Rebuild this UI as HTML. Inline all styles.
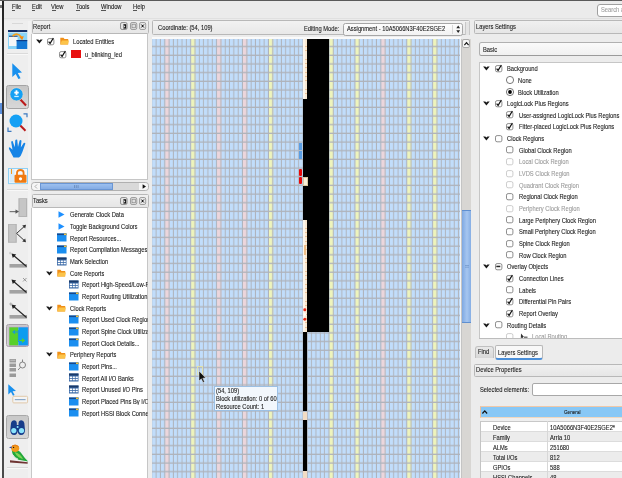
<!DOCTYPE html><html><head><meta charset="utf-8"><style>
html,body{margin:0;padding:0}
body{width:622px;height:478px;overflow:hidden;position:relative;background:#ececec;font-family:"Liberation Sans", sans-serif}
.t{position:absolute;white-space:nowrap;font-size:6.6px;line-height:7.5px;color:#1a1a1a;-webkit-text-stroke:0.1px currentColor;transform:scaleX(0.875);transform-origin:0 0}
#root{will-change:transform;position:absolute;left:0;top:0;width:622px;height:478px;overflow:hidden}
</style></head><body><div id="root">
<div style="position:absolute;left:0px;top:0px;width:2.4px;height:478px;background:#f6f6f6"></div>
<div style="position:absolute;left:2.3px;top:0px;width:1.4px;height:478px;background:linear-gradient(#222,#3a3a3a 20%,#555 60%,#4a4a4a)"></div>
<div style="position:absolute;left:0px;top:0px;width:622px;height:1px;background:#5a5a5a"></div>
<div style="position:absolute;left:0px;top:103px;width:2.4px;height:11.3px;background:#5b8fdc"></div>
<div style="position:absolute;left:0px;top:5px;width:1.6px;height:3px;background:#777"></div>
<div style="position:absolute;left:3.7px;top:1px;width:618.3px;height:18.6px;background:#ebebeb"></div>
<div style="position:absolute;left:3.7px;top:17.8px;width:618.3px;height:1.6px;background:linear-gradient(#dcdcdc,#e4e4e4)"></div>
<div class="t" style="left:11.6px;top:3.10px;">File</div>
<div class="t" style="left:31.6px;top:3.10px;">Edit</div>
<div class="t" style="left:51.4px;top:3.10px;">View</div>
<div class="t" style="left:75.8px;top:3.10px;">Tools</div>
<div class="t" style="left:100.8px;top:3.10px;">Window</div>
<div class="t" style="left:133.2px;top:3.10px;">Help</div>
<div style="position:absolute;left:11.8px;top:9.7px;width:3px;height:0.6px;background:#555"></div>
<div style="position:absolute;left:31.8px;top:9.7px;width:3.2px;height:0.6px;background:#555"></div>
<div style="position:absolute;left:51.6px;top:9.7px;width:4px;height:0.6px;background:#555"></div>
<div style="position:absolute;left:76px;top:9.7px;width:3.5px;height:0.6px;background:#555"></div>
<div style="position:absolute;left:101px;top:9.7px;width:5px;height:0.6px;background:#555"></div>
<div style="position:absolute;left:133.4px;top:9.7px;width:3.6px;height:0.6px;background:#555"></div>
<div style="position:absolute;left:597.2px;top:3.5px;width:30px;height:13.4px;background:#fff;border:1px solid #a0a0a0;border-radius:3px;box-sizing:border-box"></div>
<div class="t" style="left:600.5px;top:6.20px;color:#a0a0a0">Search a</div>
<div style="position:absolute;left:3.7px;top:20.5px;width:26.6px;height:458px;background:#eeeeee"></div>
<div style="position:absolute;left:28.2px;top:20.5px;width:2.5px;height:458px;background:#f2f2f2"></div>
<div style="position:absolute;left:12px;top:23.2px;width:11px;height:0.8px;background:#d8d8d8"></div>
<div style="position:absolute;left:31.5px;top:20.2px;width:117px;height:14px;background:linear-gradient(#f0f0f0,#e6e6e6);border:1px solid #b8b8b8;border-radius:1.5px;box-sizing:border-box"></div>
<div class="t" style="left:33.0px;top:22.70px;">Report</div>
<svg style="position:absolute;left:119.7px;top:22.4px;overflow:visible" width="7.5" height="8" viewBox="0 0 7.5 8"><rect x="0.5" y="0.5" width="6.6" height="7" rx="1.6" fill="#e4e4e4" stroke="#7a7a7a" stroke-width="0.8"/><path d="M3.4 2.2 L6.2 2.2 L6.2 6.6 L3.4 6.6 Z" fill="#111"/><path d="M3.6 2.8 L5.4 4.4 L3.6 6" fill="#ddd"/></svg>
<svg style="position:absolute;left:129.7px;top:22.4px;overflow:visible" width="7" height="8" viewBox="0 0 7 8"><rect x="0.5" y="0.5" width="6.3" height="7" rx="1.6" fill="#e0e0e0" stroke="#8a8a8a" stroke-width="0.8"/><rect x="2" y="2.2" width="3.4" height="3.6" fill="none" stroke="#777" stroke-width="0.6"/></svg>
<svg style="position:absolute;left:139.4px;top:22.4px;overflow:visible" width="7" height="8" viewBox="0 0 7 8"><rect x="0.5" y="0.5" width="6.2" height="7" rx="1.6" fill="#e8e8e8" stroke="#8a8a8a" stroke-width="0.8"/><path d="M1.8 2 L5.4 6 M5.4 2 L1.8 6" stroke="#555" stroke-width="0.7"/><circle cx="3.6" cy="4" r="0.9" fill="#111"/></svg>
<div style="position:absolute;left:30.8px;top:34px;width:117.7px;height:146px;background:#fff;border:1px solid #c6c6c6;border-left:1.8px solid #c8c8c8;border-top:none;box-sizing:border-box"></div>
<div style="position:absolute;left:31px;top:182px;width:117.6px;height:9px;background:#d9d9d9;border:1px solid #b0b0b0;border-radius:3.5px;box-sizing:border-box"></div>
<div style="position:absolute;left:31.6px;top:182.6px;width:8.4px;height:7.8px;background:#f6f6f6;border-radius:3px 0 0 3px"></div>
<svg style="position:absolute;left:34px;top:184.3px;overflow:visible" width="4" height="5" viewBox="0 0 4 5"><path d="M3 0.5 L1 2.5 L3 4.5" fill="none" stroke="#999" stroke-width="0.8"/></svg>
<div style="position:absolute;left:40px;top:182.8px;width:73.3px;height:7.4px;background:linear-gradient(#9cc0f0,#84ace4);border:0.6px solid #6a96d4;box-sizing:border-box"></div>
<svg style="position:absolute;left:74px;top:184.8px;overflow:visible" width="5" height="3" viewBox="0 0 5 3"><path d="M0.5 0 V3 M2.3 0 V3 M4.1 0 V3" stroke="#5a7aa8" stroke-width="0.6"/></svg>
<div style="position:absolute;left:138.6px;top:182.6px;width:9.4px;height:7.8px;background:#f6f6f6;border-radius:0 3px 3px 0"></div>
<svg style="position:absolute;left:141.6px;top:184px;overflow:visible" width="4.5" height="5" viewBox="0 0 4.5 5"><path d="M0.6 0.3 L4 2.5 L0.6 4.7 Z" fill="#111"/></svg>
<div style="position:absolute;left:31.5px;top:194.3px;width:117px;height:14px;background:linear-gradient(#f0f0f0,#e6e6e6);border:1px solid #b8b8b8;border-radius:1.5px;box-sizing:border-box"></div>
<div class="t" style="left:33.0px;top:196.80px;">Tasks</div>
<svg style="position:absolute;left:119.7px;top:196.5px;overflow:visible" width="7.5" height="8" viewBox="0 0 7.5 8"><rect x="0.5" y="0.5" width="6.6" height="7" rx="1.6" fill="#e4e4e4" stroke="#7a7a7a" stroke-width="0.8"/><path d="M3.4 2.2 L6.2 2.2 L6.2 6.6 L3.4 6.6 Z" fill="#111"/><path d="M3.6 2.8 L5.4 4.4 L3.6 6" fill="#ddd"/></svg>
<svg style="position:absolute;left:129.7px;top:196.5px;overflow:visible" width="7" height="8" viewBox="0 0 7 8"><rect x="0.5" y="0.5" width="6.3" height="7" rx="1.6" fill="#e0e0e0" stroke="#8a8a8a" stroke-width="0.8"/><rect x="2" y="2.2" width="3.4" height="3.6" fill="none" stroke="#777" stroke-width="0.6"/></svg>
<svg style="position:absolute;left:139.4px;top:196.5px;overflow:visible" width="7" height="8" viewBox="0 0 7 8"><rect x="0.5" y="0.5" width="6.2" height="7" rx="1.6" fill="#e8e8e8" stroke="#8a8a8a" stroke-width="0.8"/><path d="M1.8 2 L5.4 6 M5.4 2 L1.8 6" stroke="#555" stroke-width="0.7"/><circle cx="3.6" cy="4" r="0.9" fill="#111"/></svg>
<div style="position:absolute;left:30.8px;top:208.3px;width:117.7px;height:272px;background:#fff;border:1px solid #c6c6c6;border-left:1.8px solid #c8c8c8;border-top:none;box-sizing:border-box"></div>
<div style="position:absolute;left:151.8px;top:20.2px;width:318.7px;height:15px;background:linear-gradient(#f2f2f2,#e8e8e8);border:1px solid #b8b8b8;border-radius:1.5px;box-sizing:border-box"></div>
<div class="t" style="left:157.6px;top:24.00px;">Coordinate: (54, 109)</div>
<div class="t" style="left:304.3px;top:24.60px;">Editing Mode:</div>
<div style="position:absolute;left:343.4px;top:22.5px;width:119.8px;height:13.2px;background:linear-gradient(#fdfdfd,#f2f2f2);border:1px solid #a6a6a6;border-radius:2.5px;box-sizing:border-box"></div>
<div style="position:absolute;left:452.3px;top:24.5px;width:0.7px;height:9px;background:#d8d8d8"></div>
<svg style="position:absolute;left:455.6px;top:24.8px;overflow:visible" width="4.4" height="8.5" viewBox="0 0 4.4 8.5"><path d="M0.3 3.2 L2.2 0.5 L4.1 3.2 Z M0.3 5.3 L2.2 8 L4.1 5.3 Z" fill="#222"/></svg>
<div style="position:absolute;left:465px;top:22px;width:4.5px;height:13px;background:#e4e4e4;border-left:0.6px solid #c8c8c8;border-right:0.6px solid #c8c8c8;box-sizing:border-box"></div>
<div class="t" style="left:347px;top:24.80px;">Assignment - 10A5066N3F40E2SGE2</div>
<div style="position:absolute;left:151.5px;top:36.5px;width:309px;height:2.3px;background:#fafafa"></div>
<svg width="308.6" height="439.2" viewBox="151.7 38.8 308.6 439.2" style="position:absolute;left:151.7px;top:38.8px">
<rect x="151.7" y="38.8" width="308.6" height="439.2" fill="#afb3bb"/>
<pattern id="pb" patternUnits="userSpaceOnUse" x="151.940" y="38.384" width="4.321" height="8.676"><rect width="3.35" height="7.35" fill="#c1ddfb"/></pattern>
<pattern id="pp" patternUnits="userSpaceOnUse" x="151.940" y="38.384" width="4.321" height="8.676"><rect width="3.35" height="7.35" fill="#ecd6dc"/></pattern>
<pattern id="py" patternUnits="userSpaceOnUse" x="151.940" y="38.384" width="4.321" height="8.676"><rect width="3.35" height="7.35" fill="#eef4bc"/></pattern>
<pattern id="pw" patternUnits="userSpaceOnUse" x="151.940" y="38.384" width="4.321" height="8.676"><rect width="3.35" height="7.35" fill="#f6eee2"/></pattern>
<pattern id="pl" patternUnits="userSpaceOnUse" x="151.940" y="38.384" width="4.321" height="8.676"><rect width="3.35" height="7.35" fill="#d4e8fa"/></pattern>
<rect x="151.7" y="38.8" width="308.6" height="439.2" fill="url(#pb)"/>
<rect x="164.90" y="38.8" width="4.321" height="439.2" fill="#afb3bb"/><rect x="164.90" y="38.8" width="4.321" height="439.2" fill="url(#pp)"/>
<rect x="190.83" y="38.8" width="4.321" height="439.2" fill="#afb3bb"/><rect x="190.83" y="38.8" width="4.321" height="439.2" fill="url(#py)"/>
<rect x="216.75" y="38.8" width="4.321" height="439.2" fill="#afb3bb"/><rect x="216.75" y="38.8" width="4.321" height="439.2" fill="url(#pp)"/>
<rect x="242.68" y="38.8" width="4.321" height="439.2" fill="#afb3bb"/><rect x="242.68" y="38.8" width="4.321" height="439.2" fill="url(#pp)"/>
<rect x="268.61" y="38.8" width="4.321" height="439.2" fill="#afb3bb"/><rect x="268.61" y="38.8" width="4.321" height="439.2" fill="url(#py)"/>
<rect x="329.10" y="38.8" width="4.321" height="439.2" fill="#afb3bb"/><rect x="329.10" y="38.8" width="4.321" height="439.2" fill="url(#py)"/>
<rect x="355.03" y="38.8" width="4.321" height="439.2" fill="#afb3bb"/><rect x="355.03" y="38.8" width="4.321" height="439.2" fill="url(#py)"/>
<rect x="380.95" y="38.8" width="4.321" height="439.2" fill="#afb3bb"/><rect x="380.95" y="38.8" width="4.321" height="439.2" fill="url(#pp)"/>
<rect x="406.88" y="38.8" width="4.321" height="439.2" fill="#afb3bb"/><rect x="406.88" y="38.8" width="4.321" height="439.2" fill="url(#py)"/>
<rect x="432.81" y="38.8" width="4.321" height="439.2" fill="#afb3bb"/><rect x="432.81" y="38.8" width="4.321" height="439.2" fill="url(#py)"/>
<div style="position:absolute;left:303.17499999999995px;top:38.8px;width:4.321px;height:60px;background:linear-gradient(90deg,#fbf6ee 0,#fbf4ea 45%,#f4dcbc 75%,#f8ecdc 100%)"></div>
<div style="position:absolute;left:305.47499999999997px;top:40px;width:1.4px;height:58px;background:repeating-linear-gradient(#f8ead6 0,#f8ead6 1.6px,#e8b888 1.6px,#e8b888 2.4px,#f8ead6 2.4px,#f8ead6 4.3px);opacity:.8"></div>
<div style="position:absolute;left:307.4959999999999px;top:39px;width:21.605000000000018px;height:293.2px;background:#000"></div>
<div style="position:absolute;left:303.17499999999995px;top:98.8px;width:4.321px;height:121.50000000000001px;background:#000"></div>
<div style="position:absolute;left:303.17499999999995px;top:220.3px;width:4.321px;height:111.89999999999998px;background:linear-gradient(90deg,#fbf6ee 0,#fbf4ea 45%,#f4dcbc 75%,#f8ecdc 100%)"></div>
<div style="position:absolute;left:305.47499999999997px;top:222px;width:1.4px;height:108px;background:repeating-linear-gradient(#f8ead6 0,#f8ead6 1.6px,#e8b888 1.6px,#e8b888 2.4px,#f8ead6 2.4px,#f8ead6 4.3px);opacity:.8"></div>
<div style="position:absolute;left:303.97499999999997px;top:245px;width:2.2px;height:10px;background:#eab070;opacity:.8"></div>
<div style="position:absolute;left:303.47499999999997px;top:332.2px;width:3.7209999999999996px;height:79.30000000000001px;background:#000"></div>
<div style="position:absolute;left:303.17499999999995px;top:411.5px;width:4.321px;height:8.5px;background:#f2dcc4"></div>
<div style="position:absolute;left:303.47499999999997px;top:420px;width:3.7209999999999996px;height:51px;background:#000"></div>
<div style="position:absolute;left:303.17499999999995px;top:471px;width:4.321px;height:7px;background:#f2dcc4"></div>
<svg style="position:absolute;left:303.47499999999997px;top:307.5px;overflow:visible" width="3.6" height="13" viewBox="0 0 3.6 13"><circle cx="1.8" cy="1.8" r="1.5" fill="#e82818"/><circle cx="1.8" cy="11.2" r="1.5" fill="#e82818"/><circle cx="1.8" cy="6.5" r="1.2" fill="#fff"/></svg>
<div style="position:absolute;left:299.154px;top:142.5px;width:3.2px;height:7.4px;background:#5a9ee4"></div>
<div style="position:absolute;left:299.154px;top:151.2px;width:3.2px;height:7.4px;background:#5a9ee4"></div>
<div style="position:absolute;left:299.454px;top:168.6px;width:3px;height:7.2px;background:#e80808;border-radius:1px"></div>
<div style="position:absolute;left:299.454px;top:177.3px;width:3px;height:7.2px;background:#e80808;border-radius:1px"></div>
<div style="position:absolute;left:302.7px;top:177px;width:5.1px;height:8.6px;background:#faf0d8;border:0.5px solid #d8c8a0;box-sizing:border-box"></div>
<div style="position:absolute;left:214.1px;top:385.7px;width:64px;height:25.4px;background:#f2f7fc;border:1px solid #9cc0e4;box-sizing:border-box"></div>
<div class="t" style="left:215.8px;top:387.40px;">(54, 109)</div>
<div class="t" style="left:215.8px;top:395.20px;">Block utilization: 0 of 60</div>
<div class="t" style="left:215.8px;top:403.00px;">Resource Count: 1</div>
<svg style="position:absolute;left:197px;top:366px" width="12" height="18" viewBox="0 0 12 18"><rect x="0.5" y="0.5" width="5" height="8" fill="none" stroke="#e8e4a0" stroke-width="0.8"/><path d="M2 5 L2 15 L4.3 12.8 L6 16.5 L7.5 15.8 L5.8 12.2 L8.8 12 Z" fill="#111" stroke="#eee" stroke-width="0.5"/></svg>
<div style="position:absolute;left:460.3px;top:36.5px;width:1.2px;height:442px;background:#f6f6f6"></div>
<div style="position:absolute;left:461.3px;top:38.5px;width:9.6px;height:440px;background:#d8d6d3;border-left:1px solid #c4c4c4;box-sizing:border-box"></div>
<div style="position:absolute;left:461.8px;top:38.5px;width:8.6px;height:9.7px;background:#f6f6f6;border:1px solid #aaa;border-radius:2px;box-sizing:border-box"></div>
<svg style="position:absolute;left:463.6px;top:41.6px;overflow:visible" width="5" height="4" viewBox="0 0 5 4"><path d="M0.4 3.2 L2.5 0.6 L4.6 3.2" fill="none" stroke="#111" stroke-width="1.1"/></svg>
<div style="position:absolute;left:462px;top:210px;width:8.7px;height:113px;background:linear-gradient(90deg,#7ea8e2,#a6c6f0 55%,#86aee4);border-top:1px solid #5f8fd0;border-bottom:1px solid #5f8fd0;box-sizing:border-box"></div>
<svg style="position:absolute;left:464.5px;top:265px;overflow:visible" width="4" height="3" viewBox="0 0 4 3"><path d="M0 0.5 H4 M0 2.2 H4" stroke="#5a80b8" stroke-width="0.5"/></svg>
<div style="position:absolute;left:471px;top:20.5px;width:151px;height:458px;background:#ececec"></div>
<div style="position:absolute;left:474.3px;top:20.2px;width:150px;height:13.9px;background:linear-gradient(#f0f0f0,#e6e6e6);border:1px solid #b8b8b8;border-radius:1.5px;box-sizing:border-box"></div>
<div class="t" style="left:475.8px;top:22.70px;">Layers Settings</div>
<div style="position:absolute;left:478.8px;top:41.8px;width:150px;height:13.9px;background:linear-gradient(#fafafa,#f0f0f0);border:1px solid #b0b0b0;border-bottom-color:#9a9a9a;border-radius:2.5px;box-sizing:border-box"></div>
<div class="t" style="left:483px;top:45.70px;">Basic</div>
<div style="position:absolute;left:478.6px;top:61.6px;width:150px;height:277.6px;background:#fff;border:1px solid #c6c6c6;box-sizing:border-box"></div>
<svg style="position:absolute;left:35.800000000000004px;top:38.800000000000004px;overflow:visible" width="6.8" height="5" viewBox="0 0 6.8 5"><path d="M0.1 0.4 L2.3 0.4 L3.4 1.5 L4.5 0.4 L6.7 0.4 L3.4 4.4 Z" fill="#1a1a1a"/></svg>
<svg style="position:absolute;left:46.6px;top:37.5px;overflow:visible" width="7.5" height="7.5" viewBox="0 0 7.5 7.5"><rect x="0.5" y="0.6" width="6.4" height="6.2" rx="1.6" fill="#fff" stroke="#7a7a7a" stroke-width="0.85"/><path d="M1.6 3.6 L3.1 5.4 L6.4 0" fill="none" stroke="#111" stroke-width="1.2"/></svg>
<svg style="position:absolute;left:59.5px;top:37.1px;overflow:visible" width="9" height="8" viewBox="0 0 9 8"><path d="M0.3 0.8 L3.5 0.8 L4.5 2 L8.2 2 L8.2 7.4 L0.3 7.4 Z" fill="#f09018"/><path d="M1.8 3.4 L9 3.4 L7.8 7.4 L0.3 7.4 Z" fill="#fcc44a"/></svg>
<div class="t" style="left:72.6px;top:38.00px;">Located Entities</div>
<svg style="position:absolute;left:58.5px;top:50.5px;overflow:visible" width="7.5" height="7.5" viewBox="0 0 7.5 7.5"><rect x="0.5" y="0.6" width="6.4" height="6.2" rx="1.6" fill="#fff" stroke="#7a7a7a" stroke-width="0.85"/><path d="M1.6 3.6 L3.1 5.4 L6.4 0" fill="none" stroke="#111" stroke-width="1.2"/></svg>
<div style="position:absolute;left:71.4px;top:50.2px;width:9.6px;height:8px;background:#e81010"></div>
<div class="t" style="left:84.6px;top:51.00px;">u_blinking_led</div>
<svg style="position:absolute;left:58.4px;top:211.1px;overflow:visible" width="7" height="7" viewBox="0 0 7 7"><path d="M0.5 0.3 L6.5 3.5 L0.5 6.7 Z" fill="#1e90ff"/></svg>
<div class="t" style="left:70.2px;top:211.40px;max-width:88.6px;overflow:hidden">Generate Clock Data</div>
<svg style="position:absolute;left:58.4px;top:222.76px;overflow:visible" width="7" height="7" viewBox="0 0 7 7"><path d="M0.5 0.3 L6.5 3.5 L0.5 6.7 Z" fill="#1e90ff"/></svg>
<div class="t" style="left:70.2px;top:223.06px;max-width:88.6px;overflow:hidden">Toggle Background Colors</div>
<svg style="position:absolute;left:57.3px;top:233.42px;overflow:visible" width="10" height="9" viewBox="0 0 10 9"><rect x="0" y="0.5" width="9.5" height="8" fill="#1a8ef0"/><rect x="0" y="0.5" width="9.5" height="1.6" fill="#18488a"/><rect x="7" y="0.5" width="2.5" height="1.6" fill="#f0c040"/></svg>
<div class="t" style="left:70.2px;top:234.72px;max-width:88.6px;overflow:hidden">Report Resources...</div>
<svg style="position:absolute;left:57.3px;top:245.07999999999998px;overflow:visible" width="10" height="9" viewBox="0 0 10 9"><rect x="0" y="0.5" width="9.5" height="8" fill="#1a8ef0"/><rect x="0" y="0.5" width="9.5" height="1.6" fill="#18488a"/><rect x="7" y="0.5" width="2.5" height="1.6" fill="#f0c040"/></svg>
<div class="t" style="left:70.2px;top:246.38px;max-width:88.6px;overflow:hidden">Report Compilation Messages</div>
<svg style="position:absolute;left:57.3px;top:256.74px;overflow:visible" width="10" height="9" viewBox="0 0 10 9"><rect x="0" y="0.5" width="9.5" height="8" fill="#3a6aa8"/><rect x="0" y="0.5" width="9.5" height="2" fill="#1a3a6a"/><rect x="0.8" y="3.5" width="2.2" height="1.5" fill="#fff"/><rect x="3.7" y="3.5" width="2.2" height="1.5" fill="#fff"/><rect x="6.6" y="3.5" width="2.2" height="1.5" fill="#fff"/><rect x="0.8" y="5.8" width="2.2" height="1.5" fill="#fff"/><rect x="3.7" y="5.8" width="2.2" height="1.5" fill="#fff"/><rect x="6.6" y="5.8" width="2.2" height="1.5" fill="#fff"/></svg>
<div class="t" style="left:70.2px;top:258.04px;max-width:88.6px;overflow:hidden">Mark Selection</div>
<svg style="position:absolute;left:46.300000000000004px;top:270.59999999999997px;overflow:visible" width="6.8" height="5" viewBox="0 0 6.8 5"><path d="M0.1 0.4 L2.3 0.4 L3.4 1.5 L4.5 0.4 L6.7 0.4 L3.4 4.4 Z" fill="#1a1a1a"/></svg>
<svg style="position:absolute;left:57.2px;top:268.9px;overflow:visible" width="9" height="8" viewBox="0 0 9 8"><path d="M0.3 0.8 L3.5 0.8 L4.5 2 L8.2 2 L8.2 7.4 L0.3 7.4 Z" fill="#f09018"/><path d="M1.8 3.4 L9 3.4 L7.8 7.4 L0.3 7.4 Z" fill="#fcc44a"/></svg>
<div class="t" style="left:70.2px;top:269.70px;max-width:88px;overflow:hidden">Core Reports</div>
<svg style="position:absolute;left:69.2px;top:280.06px;overflow:visible" width="10" height="9" viewBox="0 0 10 9"><rect x="0" y="0.5" width="9.5" height="8" fill="#3a6aa8"/><rect x="0" y="0.5" width="9.5" height="2" fill="#1a3a6a"/><rect x="0.8" y="3.5" width="2.2" height="1.5" fill="#fff"/><rect x="3.7" y="3.5" width="2.2" height="1.5" fill="#fff"/><rect x="6.6" y="3.5" width="2.2" height="1.5" fill="#fff"/><rect x="0.8" y="5.8" width="2.2" height="1.5" fill="#fff"/><rect x="3.7" y="5.8" width="2.2" height="1.5" fill="#fff"/><rect x="6.6" y="5.8" width="2.2" height="1.5" fill="#fff"/></svg>
<div class="t" style="left:81.8px;top:281.36px;max-width:75.2px;overflow:hidden">Report High-Speed/Low-Power Tiles</div>
<svg style="position:absolute;left:69.2px;top:291.72px;overflow:visible" width="10" height="9" viewBox="0 0 10 9"><rect x="0" y="0.5" width="9.5" height="8" fill="#1a8ef0"/><rect x="0" y="0.5" width="9.5" height="1.6" fill="#18488a"/><rect x="7" y="0.5" width="2.5" height="1.6" fill="#f0c040"/></svg>
<div class="t" style="left:81.8px;top:293.02px;max-width:75.2px;overflow:hidden">Report Routing Utilization</div>
<svg style="position:absolute;left:46.300000000000004px;top:305.58px;overflow:visible" width="6.8" height="5" viewBox="0 0 6.8 5"><path d="M0.1 0.4 L2.3 0.4 L3.4 1.5 L4.5 0.4 L6.7 0.4 L3.4 4.4 Z" fill="#1a1a1a"/></svg>
<svg style="position:absolute;left:57.2px;top:303.88px;overflow:visible" width="9" height="8" viewBox="0 0 9 8"><path d="M0.3 0.8 L3.5 0.8 L4.5 2 L8.2 2 L8.2 7.4 L0.3 7.4 Z" fill="#f09018"/><path d="M1.8 3.4 L9 3.4 L7.8 7.4 L0.3 7.4 Z" fill="#fcc44a"/></svg>
<div class="t" style="left:70.2px;top:304.68px;max-width:88px;overflow:hidden">Clock Reports</div>
<svg style="position:absolute;left:69.2px;top:315.03999999999996px;overflow:visible" width="10" height="9" viewBox="0 0 10 9"><rect x="0" y="0.5" width="9.5" height="8" fill="#1a8ef0"/><rect x="0" y="0.5" width="9.5" height="1.6" fill="#18488a"/><rect x="7" y="0.5" width="2.5" height="1.6" fill="#f0c040"/></svg>
<div class="t" style="left:81.8px;top:316.34px;max-width:75.2px;overflow:hidden">Report Used Clock Regions</div>
<svg style="position:absolute;left:69.2px;top:326.7px;overflow:visible" width="10" height="9" viewBox="0 0 10 9"><rect x="0" y="0.5" width="9.5" height="8" fill="#1a8ef0"/><rect x="0" y="0.5" width="9.5" height="1.6" fill="#18488a"/><rect x="7" y="0.5" width="2.5" height="1.6" fill="#f0c040"/></svg>
<div class="t" style="left:81.8px;top:328.00px;max-width:75.2px;overflow:hidden">Report Spine Clock Utilization</div>
<svg style="position:absolute;left:69.2px;top:338.36px;overflow:visible" width="10" height="9" viewBox="0 0 10 9"><rect x="0" y="0.5" width="9.5" height="8" fill="#1a8ef0"/><rect x="0" y="0.5" width="9.5" height="1.6" fill="#18488a"/><rect x="7" y="0.5" width="2.5" height="1.6" fill="#f0c040"/></svg>
<div class="t" style="left:81.8px;top:339.66px;max-width:75.2px;overflow:hidden">Report Clock Details...</div>
<svg style="position:absolute;left:46.300000000000004px;top:352.21999999999997px;overflow:visible" width="6.8" height="5" viewBox="0 0 6.8 5"><path d="M0.1 0.4 L2.3 0.4 L3.4 1.5 L4.5 0.4 L6.7 0.4 L3.4 4.4 Z" fill="#1a1a1a"/></svg>
<svg style="position:absolute;left:57.2px;top:350.52px;overflow:visible" width="9" height="8" viewBox="0 0 9 8"><path d="M0.3 0.8 L3.5 0.8 L4.5 2 L8.2 2 L8.2 7.4 L0.3 7.4 Z" fill="#f09018"/><path d="M1.8 3.4 L9 3.4 L7.8 7.4 L0.3 7.4 Z" fill="#fcc44a"/></svg>
<div class="t" style="left:70.2px;top:351.32px;max-width:88px;overflow:hidden">Periphery Reports</div>
<svg style="position:absolute;left:69.2px;top:361.68px;overflow:visible" width="10" height="9" viewBox="0 0 10 9"><rect x="0" y="0.5" width="9.5" height="8" fill="#1a8ef0"/><rect x="0" y="0.5" width="9.5" height="1.6" fill="#18488a"/><rect x="7" y="0.5" width="2.5" height="1.6" fill="#f0c040"/></svg>
<div class="t" style="left:81.8px;top:362.98px;max-width:75.2px;overflow:hidden">Report Pins...</div>
<svg style="position:absolute;left:69.2px;top:373.34000000000003px;overflow:visible" width="10" height="9" viewBox="0 0 10 9"><rect x="0" y="0.5" width="9.5" height="8" fill="#3a6aa8"/><rect x="0" y="0.5" width="9.5" height="2" fill="#1a3a6a"/><rect x="0.8" y="3.5" width="2.2" height="1.5" fill="#fff"/><rect x="3.7" y="3.5" width="2.2" height="1.5" fill="#fff"/><rect x="6.6" y="3.5" width="2.2" height="1.5" fill="#fff"/><rect x="0.8" y="5.8" width="2.2" height="1.5" fill="#fff"/><rect x="3.7" y="5.8" width="2.2" height="1.5" fill="#fff"/><rect x="6.6" y="5.8" width="2.2" height="1.5" fill="#fff"/></svg>
<div class="t" style="left:81.8px;top:374.64px;max-width:75.2px;overflow:hidden">Report All I/O Banks</div>
<svg style="position:absolute;left:69.2px;top:385.0px;overflow:visible" width="10" height="9" viewBox="0 0 10 9"><rect x="0" y="0.5" width="9.5" height="8" fill="#3a6aa8"/><rect x="0" y="0.5" width="9.5" height="2" fill="#1a3a6a"/><rect x="0.8" y="3.5" width="2.2" height="1.5" fill="#fff"/><rect x="3.7" y="3.5" width="2.2" height="1.5" fill="#fff"/><rect x="6.6" y="3.5" width="2.2" height="1.5" fill="#fff"/><rect x="0.8" y="5.8" width="2.2" height="1.5" fill="#fff"/><rect x="3.7" y="5.8" width="2.2" height="1.5" fill="#fff"/><rect x="6.6" y="5.8" width="2.2" height="1.5" fill="#fff"/></svg>
<div class="t" style="left:81.8px;top:386.30px;max-width:75.2px;overflow:hidden">Report Unused I/O Pins</div>
<svg style="position:absolute;left:69.2px;top:396.65999999999997px;overflow:visible" width="10" height="9" viewBox="0 0 10 9"><rect x="0" y="0.5" width="9.5" height="8" fill="#1a8ef0"/><rect x="0" y="0.5" width="9.5" height="1.6" fill="#18488a"/><rect x="7" y="0.5" width="2.5" height="1.6" fill="#f0c040"/></svg>
<div class="t" style="left:81.8px;top:397.96px;max-width:75.2px;overflow:hidden">Report Placed Pins By I/O Standard</div>
<svg style="position:absolute;left:69.2px;top:408.32px;overflow:visible" width="10" height="9" viewBox="0 0 10 9"><rect x="0" y="0.5" width="9.5" height="8" fill="#1a8ef0"/><rect x="0" y="0.5" width="9.5" height="1.6" fill="#18488a"/><rect x="7" y="0.5" width="2.5" height="1.6" fill="#f0c040"/></svg>
<div class="t" style="left:81.8px;top:409.62px;max-width:75.2px;overflow:hidden">Report HSSI Block Connectivity</div>
<svg style="position:absolute;left:483.20000000000005px;top:66.10000000000001px;overflow:visible" width="6.8" height="5" viewBox="0 0 6.8 5"><path d="M0.1 0.4 L2.3 0.4 L3.4 1.5 L4.5 0.4 L6.7 0.4 L3.4 4.4 Z" fill="#1a1a1a"/></svg>
<svg style="position:absolute;left:494.90000000000003px;top:64.80000000000001px;overflow:visible" width="7.5" height="7.5" viewBox="0 0 7.5 7.5"><rect x="0.5" y="0.6" width="6.4" height="6.2" rx="1.6" fill="#fff" stroke="#7a7a7a" stroke-width="0.85"/><path d="M1.6 3.6 L3.1 5.4 L6.4 0" fill="none" stroke="#111" stroke-width="1.2"/></svg>
<div class="t" style="left:506.7px;top:65.20px;">Background</div>
<svg style="position:absolute;left:506px;top:76.057px;overflow:visible" width="8" height="8" viewBox="0 0 8 8"><circle cx="4" cy="4" r="3.6" fill="#fff" stroke="#555" stroke-width="0.8"/></svg>
<div class="t" style="left:518.4px;top:76.86px;">None</div>
<svg style="position:absolute;left:506px;top:87.714px;overflow:visible" width="8" height="8" viewBox="0 0 8 8"><circle cx="4" cy="4" r="3.6" fill="#fff" stroke="#555" stroke-width="0.8"/><circle cx="4" cy="4" r="1.9" fill="#000"/></svg>
<div class="t" style="left:518.4px;top:88.51px;">Block Utilization</div>
<svg style="position:absolute;left:483.20000000000005px;top:101.07100000000001px;overflow:visible" width="6.8" height="5" viewBox="0 0 6.8 5"><path d="M0.1 0.4 L2.3 0.4 L3.4 1.5 L4.5 0.4 L6.7 0.4 L3.4 4.4 Z" fill="#1a1a1a"/></svg>
<svg style="position:absolute;left:494.90000000000003px;top:99.77100000000002px;overflow:visible" width="7.5" height="7.5" viewBox="0 0 7.5 7.5"><rect x="0.5" y="0.6" width="6.4" height="6.2" rx="1.6" fill="#fff" stroke="#7a7a7a" stroke-width="0.85"/><path d="M1.6 3.6 L3.1 5.4 L6.4 0" fill="none" stroke="#111" stroke-width="1.2"/></svg>
<div class="t" style="left:506.7px;top:100.17px;">LogicLock Plus Regions</div>
<svg style="position:absolute;left:506.0px;top:111.42800000000001px;overflow:visible" width="7.5" height="7.5" viewBox="0 0 7.5 7.5"><rect x="0.5" y="0.6" width="6.4" height="6.2" rx="1.6" fill="#fff" stroke="#7a7a7a" stroke-width="0.85"/><path d="M1.6 3.6 L3.1 5.4 L6.4 0" fill="none" stroke="#111" stroke-width="1.2"/></svg>
<div class="t" style="left:518.5px;top:111.83px;">User-assigned LogicLock Plus Regions</div>
<svg style="position:absolute;left:506.0px;top:123.08500000000001px;overflow:visible" width="7.5" height="7.5" viewBox="0 0 7.5 7.5"><rect x="0.5" y="0.6" width="6.4" height="6.2" rx="1.6" fill="#fff" stroke="#7a7a7a" stroke-width="0.85"/><path d="M1.6 3.6 L3.1 5.4 L6.4 0" fill="none" stroke="#111" stroke-width="1.2"/></svg>
<div class="t" style="left:518.5px;top:123.49px;">Fitter-placed LogicLock Plus Regions</div>
<svg style="position:absolute;left:483.20000000000005px;top:136.042px;overflow:visible" width="6.8" height="5" viewBox="0 0 6.8 5"><path d="M0.1 0.4 L2.3 0.4 L3.4 1.5 L4.5 0.4 L6.7 0.4 L3.4 4.4 Z" fill="#1a1a1a"/></svg>
<svg style="position:absolute;left:494.90000000000003px;top:134.74200000000002px;overflow:visible" width="7.5" height="7.5" viewBox="0 0 7.5 7.5"><rect x="0.5" y="0.6" width="6.4" height="6.2" rx="1.6" fill="#fff" stroke="#7a7a7a" stroke-width="0.85"/></svg>
<div class="t" style="left:506.7px;top:135.14px;">Clock Regions</div>
<svg style="position:absolute;left:506.0px;top:146.39900000000003px;overflow:visible" width="7.5" height="7.5" viewBox="0 0 7.5 7.5"><rect x="0.5" y="0.6" width="6.4" height="6.2" rx="1.6" fill="#fff" stroke="#7a7a7a" stroke-width="0.85"/></svg>
<div class="t" style="left:518.5px;top:146.80px;">Global Clock Region</div>
<svg style="position:absolute;left:506.0px;top:158.056px;overflow:visible" width="7.5" height="7.5" viewBox="0 0 7.5 7.5"><rect x="0.5" y="0.6" width="6.4" height="6.2" rx="1.6" fill="#fff" stroke="#c4c4c4" stroke-width="0.85"/></svg>
<div class="t" style="left:518.5px;top:158.46px;color:#9a9a9a;">Local Clock Region</div>
<svg style="position:absolute;left:506.0px;top:169.713px;overflow:visible" width="7.5" height="7.5" viewBox="0 0 7.5 7.5"><rect x="0.5" y="0.6" width="6.4" height="6.2" rx="1.6" fill="#fff" stroke="#c4c4c4" stroke-width="0.85"/></svg>
<div class="t" style="left:518.5px;top:170.11px;color:#9a9a9a;">LVDS Clock Region</div>
<svg style="position:absolute;left:506.0px;top:181.37px;overflow:visible" width="7.5" height="7.5" viewBox="0 0 7.5 7.5"><rect x="0.5" y="0.6" width="6.4" height="6.2" rx="1.6" fill="#fff" stroke="#c4c4c4" stroke-width="0.85"/></svg>
<div class="t" style="left:518.5px;top:181.77px;color:#9a9a9a;">Quadrant Clock Region</div>
<svg style="position:absolute;left:506.0px;top:193.02700000000002px;overflow:visible" width="7.5" height="7.5" viewBox="0 0 7.5 7.5"><rect x="0.5" y="0.6" width="6.4" height="6.2" rx="1.6" fill="#fff" stroke="#7a7a7a" stroke-width="0.85"/></svg>
<div class="t" style="left:518.5px;top:193.43px;">Regional Clock Region</div>
<svg style="position:absolute;left:506.0px;top:204.68400000000003px;overflow:visible" width="7.5" height="7.5" viewBox="0 0 7.5 7.5"><rect x="0.5" y="0.6" width="6.4" height="6.2" rx="1.6" fill="#fff" stroke="#c4c4c4" stroke-width="0.85"/></svg>
<div class="t" style="left:518.5px;top:205.08px;color:#9a9a9a;">Periphery Clock Region</div>
<svg style="position:absolute;left:506.0px;top:216.341px;overflow:visible" width="7.5" height="7.5" viewBox="0 0 7.5 7.5"><rect x="0.5" y="0.6" width="6.4" height="6.2" rx="1.6" fill="#fff" stroke="#7a7a7a" stroke-width="0.85"/></svg>
<div class="t" style="left:518.5px;top:216.74px;">Large Periphery Clock Region</div>
<svg style="position:absolute;left:506.0px;top:227.99800000000002px;overflow:visible" width="7.5" height="7.5" viewBox="0 0 7.5 7.5"><rect x="0.5" y="0.6" width="6.4" height="6.2" rx="1.6" fill="#fff" stroke="#7a7a7a" stroke-width="0.85"/></svg>
<div class="t" style="left:518.5px;top:228.40px;">Small Periphery Clock Region</div>
<svg style="position:absolute;left:506.0px;top:239.655px;overflow:visible" width="7.5" height="7.5" viewBox="0 0 7.5 7.5"><rect x="0.5" y="0.6" width="6.4" height="6.2" rx="1.6" fill="#fff" stroke="#7a7a7a" stroke-width="0.85"/></svg>
<div class="t" style="left:518.5px;top:240.06px;">Spine Clock Region</div>
<svg style="position:absolute;left:506.0px;top:251.312px;overflow:visible" width="7.5" height="7.5" viewBox="0 0 7.5 7.5"><rect x="0.5" y="0.6" width="6.4" height="6.2" rx="1.6" fill="#fff" stroke="#7a7a7a" stroke-width="0.85"/></svg>
<div class="t" style="left:518.5px;top:251.71px;">Row Clock Region</div>
<svg style="position:absolute;left:483.20000000000005px;top:264.269px;overflow:visible" width="6.8" height="5" viewBox="0 0 6.8 5"><path d="M0.1 0.4 L2.3 0.4 L3.4 1.5 L4.5 0.4 L6.7 0.4 L3.4 4.4 Z" fill="#1a1a1a"/></svg>
<svg style="position:absolute;left:494.90000000000003px;top:262.969px;overflow:visible" width="7.5" height="7.5" viewBox="0 0 7.5 7.5"><rect x="0.5" y="0.6" width="6.4" height="6.2" rx="1.6" fill="#fff" stroke="#7a7a7a" stroke-width="0.85"/><rect x="1.3" y="2.7" width="4" height="1.5" fill="#222"/></svg>
<div class="t" style="left:506.7px;top:263.37px;">Overlay Objects</div>
<svg style="position:absolute;left:506.0px;top:274.626px;overflow:visible" width="7.5" height="7.5" viewBox="0 0 7.5 7.5"><rect x="0.5" y="0.6" width="6.4" height="6.2" rx="1.6" fill="#fff" stroke="#7a7a7a" stroke-width="0.85"/><path d="M1.6 3.6 L3.1 5.4 L6.4 0" fill="none" stroke="#111" stroke-width="1.2"/></svg>
<div class="t" style="left:518.5px;top:275.03px;">Connection Lines</div>
<svg style="position:absolute;left:506.0px;top:286.283px;overflow:visible" width="7.5" height="7.5" viewBox="0 0 7.5 7.5"><rect x="0.5" y="0.6" width="6.4" height="6.2" rx="1.6" fill="#fff" stroke="#7a7a7a" stroke-width="0.85"/></svg>
<div class="t" style="left:518.5px;top:286.68px;">Labels</div>
<svg style="position:absolute;left:506.0px;top:297.93999999999994px;overflow:visible" width="7.5" height="7.5" viewBox="0 0 7.5 7.5"><rect x="0.5" y="0.6" width="6.4" height="6.2" rx="1.6" fill="#fff" stroke="#7a7a7a" stroke-width="0.85"/><path d="M1.6 3.6 L3.1 5.4 L6.4 0" fill="none" stroke="#111" stroke-width="1.2"/></svg>
<div class="t" style="left:518.5px;top:298.34px;">Differential Pin Pairs</div>
<svg style="position:absolute;left:506.0px;top:309.597px;overflow:visible" width="7.5" height="7.5" viewBox="0 0 7.5 7.5"><rect x="0.5" y="0.6" width="6.4" height="6.2" rx="1.6" fill="#fff" stroke="#7a7a7a" stroke-width="0.85"/><path d="M1.6 3.6 L3.1 5.4 L6.4 0" fill="none" stroke="#111" stroke-width="1.2"/></svg>
<div class="t" style="left:518.5px;top:310.00px;">Report Overlay</div>
<svg style="position:absolute;left:483.20000000000005px;top:322.55400000000003px;overflow:visible" width="6.8" height="5" viewBox="0 0 6.8 5"><path d="M0.1 0.4 L2.3 0.4 L3.4 1.5 L4.5 0.4 L6.7 0.4 L3.4 4.4 Z" fill="#1a1a1a"/></svg>
<svg style="position:absolute;left:494.90000000000003px;top:321.254px;overflow:visible" width="7.5" height="7.5" viewBox="0 0 7.5 7.5"><rect x="0.5" y="0.6" width="6.4" height="6.2" rx="1.6" fill="#fff" stroke="#7a7a7a" stroke-width="0.85"/></svg>
<div class="t" style="left:506.7px;top:321.65px;">Routing Details</div>
<svg style="position:absolute;left:506.0px;top:332.91099999999994px;overflow:visible" width="7.5" height="7.5" viewBox="0 0 7.5 7.5"><rect x="0.5" y="0.6" width="6.4" height="6.2" rx="1.6" fill="#fff" stroke="#c4c4c4" stroke-width="0.85"/></svg>
<svg style="position:absolute;left:519.6px;top:333.01099999999997px;overflow:visible" width="8" height="7" viewBox="0 0 8 7"><path d="M1 0.5 L4 4 L2.6 4.2 L3.6 6.4 L2.8 6.8 L1.8 4.6 L0.8 5.6 Z" fill="#333"/><rect x="4" y="3.5" width="3.5" height="3" fill="#777"/></svg>
<div class="t" style="left:531.6px;top:333.31px;color:#9a9a9a;">Local Routing</div>
<div style="position:absolute;left:479px;top:339.2px;width:143px;height:2px;background:#ececec"></div>
<div style="position:absolute;left:479px;top:338.2px;width:143px;height:1px;background:#bcbcbc"></div>
<div style="position:absolute;left:474.8px;top:345.6px;width:19.6px;height:12.6px;background:linear-gradient(#e8e8e8,#d8d8d8);border:1px solid #c0c0c0;border-bottom:none;border-radius:3px 3px 0 0;box-sizing:border-box"></div>
<div class="t" style="left:477.5px;top:348.00px;">Find</div>
<div style="position:absolute;left:494.8px;top:345px;width:48.4px;height:14.5px;background:#f8f8f8;border:1px solid #b8b8b8;border-bottom:2px solid #4a8ed8;border-radius:2px 2px 3px 3px;box-sizing:border-box"></div>
<div class="t" style="left:497.5px;top:348.70px;">Layers Settings</div>
<div style="position:absolute;left:474.3px;top:363.8px;width:150px;height:13.2px;background:linear-gradient(#f0f0f0,#e6e6e6);border:1px solid #b8b8b8;border-radius:1.5px;box-sizing:border-box"></div>
<div class="t" style="left:475.8px;top:366.30px;">Device Properties</div>
<div class="t" style="left:479.8px;top:385.80px;">Selected elements:</div>
<div style="position:absolute;left:532.4px;top:383px;width:100px;height:13.4px;background:#fff;border:1px solid #a8a8a8;border-radius:2px;box-sizing:border-box"></div>
<div style="position:absolute;left:479.6px;top:405.6px;width:145px;height:12.6px;background:#88c8f6;border-top:1px solid #f0c8a8;border-left:1px solid #e8c0a0;border-bottom:1px solid #f0d8c0;box-sizing:border-box"></div>
<svg style="position:absolute;left:481.8px;top:409.6px;overflow:visible" width="5.5" height="4" viewBox="0 0 5.5 4"><path d="M0.4 3.5 L2.75 0.8 L5.1 3.5" fill="none" stroke="#111" stroke-width="1.2"/></svg>
<div class="t" style="left:563.6px;top:408.60px;font-size:5.3px">General</div>
<div style="position:absolute;left:479.6px;top:418.2px;width:145px;height:2.8px;background:#efefef"></div>
<div style="position:absolute;left:479.6px;top:421px;width:145px;height:60px;background:#fff;border-left:1px solid #c4c4c4;border-top:1px solid #c8c8c8;box-sizing:border-box"></div>
<div style="position:absolute;left:480.6px;top:421.6px;width:145px;height:9.4px;background:#ffffff"></div>
<div style="position:absolute;left:480.6px;top:430.6px;width:145px;height:0.8px;background:#dcdcdc"></div>
<div style="position:absolute;left:546.6px;top:421px;width:0.8px;height:10px;background:#d8d8d8"></div>
<div class="t" style="left:493px;top:424.10px;">Device</div>
<div class="t" style="left:549.5px;top:424.10px;">10A5066N3F40E2SGE2*</div>
<div style="position:absolute;left:480.6px;top:431.6px;width:145px;height:9.4px;background:#ececec"></div>
<div style="position:absolute;left:480.6px;top:440.6px;width:145px;height:0.8px;background:#dcdcdc"></div>
<div style="position:absolute;left:546.6px;top:431px;width:0.8px;height:10px;background:#d8d8d8"></div>
<div class="t" style="left:493px;top:434.10px;">Family</div>
<div class="t" style="left:549.5px;top:434.10px;">Arria 10</div>
<div style="position:absolute;left:480.6px;top:441.6px;width:145px;height:9.4px;background:#ffffff"></div>
<div style="position:absolute;left:480.6px;top:450.6px;width:145px;height:0.8px;background:#dcdcdc"></div>
<div style="position:absolute;left:546.6px;top:441px;width:0.8px;height:10px;background:#d8d8d8"></div>
<div class="t" style="left:493px;top:444.10px;">ALMs</div>
<div class="t" style="left:549.5px;top:444.10px;">251680</div>
<div style="position:absolute;left:480.6px;top:451.6px;width:145px;height:9.4px;background:#ececec"></div>
<div style="position:absolute;left:480.6px;top:460.6px;width:145px;height:0.8px;background:#dcdcdc"></div>
<div style="position:absolute;left:546.6px;top:451px;width:0.8px;height:10px;background:#d8d8d8"></div>
<div class="t" style="left:493px;top:454.10px;">Total I/Os</div>
<div class="t" style="left:549.5px;top:454.10px;">812</div>
<div style="position:absolute;left:480.6px;top:461.6px;width:145px;height:9.4px;background:#ffffff"></div>
<div style="position:absolute;left:480.6px;top:470.6px;width:145px;height:0.8px;background:#dcdcdc"></div>
<div style="position:absolute;left:546.6px;top:461px;width:0.8px;height:10px;background:#d8d8d8"></div>
<div class="t" style="left:493px;top:464.10px;">GPIOs</div>
<div class="t" style="left:549.5px;top:464.10px;">588</div>
<div style="position:absolute;left:480.6px;top:471.6px;width:145px;height:9.4px;background:#ececec"></div>
<div style="position:absolute;left:480.6px;top:480.6px;width:145px;height:0.8px;background:#dcdcdc"></div>
<div style="position:absolute;left:546.6px;top:471px;width:0.8px;height:10px;background:#d8d8d8"></div>
<div class="t" style="left:493px;top:474.10px;">HSSI Channels</div>
<div class="t" style="left:549.5px;top:474.10px;">48</div>
<div style="position:absolute;left:7px;top:54.1px;width:21px;height:1px;background:#f8f8f8"></div>
<div style="position:absolute;left:7px;top:53.1px;width:21px;height:1px;background:#dadada"></div>
<div style="position:absolute;left:7px;top:189.6px;width:21px;height:1px;background:#f8f8f8"></div>
<div style="position:absolute;left:7px;top:188.6px;width:21px;height:1px;background:#dadada"></div>
<div style="position:absolute;left:7px;top:468.4px;width:21px;height:1px;background:#f8f8f8"></div>
<div style="position:absolute;left:7px;top:467.4px;width:21px;height:1px;background:#dadada"></div>
<svg style="position:absolute;left:8.4px;top:29.6px;overflow:visible" width="19.2" height="19" viewBox="0 0 19.2 19"><rect x="0" y="0" width="19.2" height="19" fill="#8ad4f8"/><rect x="0" y="0" width="19.2" height="2.2" fill="#12306a"/><rect x="0" y="2.2" width="19.2" height="0.8" fill="#d8f0fc"/><rect x="1" y="6.5" width="8.6" height="9.5" fill="#f4f6f8"/><rect x="1" y="5.6" width="8.6" height="1.4" fill="#4a6a98"/><rect x="8.6" y="10" width="10.6" height="9" fill="#1478d4"/><rect x="8.6" y="10" width="10.6" height="1.2" fill="#0c3c88"/><path d="M4.6 6 Q9.5 1.8 13.6 7.4" fill="none" stroke="#f5a020" stroke-width="1.7"/><path d="M11.2 6.8 L15.8 6.2 L14.2 10.2 Z" fill="#f58a10"/></svg>
<svg style="position:absolute;left:12.2px;top:62.9px;overflow:visible" width="10.5" height="16" viewBox="0 0 10.5 16"><path d="M0.3 0.3 L10 9.5 L5.8 9.9 L8.6 15.2 L6.4 16 L3.7 10.9 L0.3 14 Z" fill="#1890ee"/></svg>
<div style="position:absolute;left:6.3px;top:84.8px;width:22.8px;height:24.7px;background:linear-gradient(#c6c6c6,#d8d8d8);border:1px solid #a4a4a4;border-radius:2.5px;box-sizing:border-box"></div>
<svg style="position:absolute;left:8px;top:86.5px;overflow:visible" width="20" height="20" viewBox="0 0 20 20"><line x1="12.2" y1="12.2" x2="18" y2="18.5" stroke="#bb1a1a" stroke-width="2"/><circle cx="8.5" cy="7.3" r="6.6" fill="#14a0f4" stroke="#fbe0c8" stroke-width="0.6"/><rect x="7.6" y="3.3" width="1.8" height="4.6" fill="#fff"/><rect x="6.3" y="4.7" width="4.4" height="1.8" fill="#fff"/><rect x="6.3" y="8.8" width="4.4" height="1.3" fill="#cfefff"/></svg>
<svg style="position:absolute;left:7px;top:112.8px;overflow:visible" width="21" height="20" viewBox="0 0 21 20"><line x1="12.8" y1="12" x2="18.5" y2="17.8" stroke="#bb1a1a" stroke-width="2"/><circle cx="9" cy="8" r="6.5" fill="#14a0f4"/><path d="M16.5 0.8 L20 0.8 L20 4.3" fill="none" stroke="#3c7ac0" stroke-width="1.2"/><path d="M1 14.5 L1 18.3 L4.5 18.3" fill="none" stroke="#3c7ac0" stroke-width="1.2"/></svg>
<svg style="position:absolute;left:8.4px;top:139.4px;overflow:visible" width="19" height="19" viewBox="0 0 19 19"><path d="M5.5 18.5 L1 10 Q0.3 8.3 1.8 8.2 L4.5 10.8 L3.2 3.2 Q3.3 1.7 4.6 2 L6.8 8.3 L7.3 1.2 Q8 0 9.2 0.8 L10 8 L11.6 1.6 Q12.6 0.6 13.5 1.7 L12.8 8.6 L15.7 4 Q16.9 3.5 17.4 4.6 L14.3 13.2 Q12.8 17.5 11 18.5 Z" fill="#1684e6"/></svg>
<svg style="position:absolute;left:7.8px;top:167.9px;overflow:visible" width="20" height="16.1" viewBox="0 0 20 16.1"><rect x="0.5" y="0.5" width="19" height="15.1" fill="#f4f8fb" stroke="#8fd0f4" stroke-width="1"/><rect x="1.5" y="1.5" width="5" height="13" fill="#d8ecf8"/><path d="M3.5 1 L3.5 6" stroke="#f39a1e" stroke-width="1"/><path d="M9 7 L9 4.8 Q9 2 12.3 2 Q15.6 2 15.6 4.8 L15.6 7" fill="none" stroke="#f07a10" stroke-width="1.8"/><rect x="6.5" y="6.8" width="12" height="8" rx="1" fill="#f07a10"/><circle cx="12.5" cy="10.8" r="1.6" fill="#fff"/></svg>
<svg style="position:absolute;left:9px;top:198px;overflow:visible" width="19" height="19" viewBox="0 0 19 19"><rect x="9.4" y="0.2" width="8.8" height="18.8" fill="#b4b4b4"/><rect x="10.6" y="1" width="6.4" height="17" fill="#c6c6c6"/><line x1="0.6" y1="13.6" x2="8" y2="13.6" stroke="#777" stroke-width="1.2"/><path d="M6.5 11.4 L10 13.6 L6.5 15.8 Z" fill="#555"/></svg>
<svg style="position:absolute;left:8.4px;top:223.9px;overflow:visible" width="19" height="19" viewBox="0 0 19 19"><rect x="0" y="0" width="8.8" height="18.8" fill="#b4b4b4"/><rect x="1.2" y="0.8" width="6.4" height="17" fill="#c6c6c6"/><path d="M8.6 9.4 L17 1.8 M8.6 9.4 L17 17.2" stroke="#333" stroke-width="1"/><path d="M14.2 1.4 L18 0.8 L17.2 4.6 Z M14.2 17.6 L18 18.2 L17.2 14.4 Z" fill="#333"/></svg>
<svg style="position:absolute;left:8.5px;top:250.9px;overflow:visible" width="19" height="17" viewBox="0 0 19 17"><rect x="0.5" y="13" width="17.5" height="3.6" fill="#a2a2a2"/><line x1="3.5" y1="3.5" x2="17.5" y2="15.5" stroke="#222" stroke-width="1.1"/><path d="M2.5 2.5 L7.2 3.6 L3.8 7 Z" fill="#222"/><path d="M1.2 0.8 L1.2 3.4 M0 2.1 L2.5 2.1" stroke="#bbb" stroke-width="0.7"/></svg>
<svg style="position:absolute;left:8.5px;top:276.8px;overflow:visible" width="19" height="17" viewBox="0 0 19 17"><rect x="0.5" y="13" width="17.5" height="3.6" fill="#a2a2a2"/><line x1="3.5" y1="3.5" x2="17.5" y2="15.5" stroke="#222" stroke-width="1.1"/><path d="M2.5 2.5 L7.2 3.6 L3.8 7 Z" fill="#222"/><path d="M14 1 L17.5 4.5 M17.5 1 L14 4.5" stroke="#777" stroke-width="0.7"/></svg>
<svg style="position:absolute;left:8.5px;top:301.5px;overflow:visible" width="19" height="17" viewBox="0 0 19 17"><rect x="0.5" y="13" width="17.5" height="3.6" fill="#a2a2a2"/><line x1="3.5" y1="3.5" x2="17.5" y2="15.5" stroke="#222" stroke-width="1.1"/><path d="M2.5 2.5 L7.2 3.6 L3.8 7 Z" fill="#222"/><path d="M1.8 0.5 L1.8 3.6 M0.3 2 L3.4 2" stroke="#999" stroke-width="0.8"/></svg>
<div style="position:absolute;left:6.3px;top:323.8px;width:23.1px;height:23.5px;background:linear-gradient(#c8c8c8,#d6d6d6);border:1px solid #a8a0a8;border-radius:2.5px;box-sizing:border-box"></div>
<svg style="position:absolute;left:8.7px;top:326.6px;overflow:visible" width="19.2" height="18.8" viewBox="0 0 19.2 18.8"><rect x="0" y="0" width="9.4" height="18.8" fill="#58d02a"/><rect x="9.4" y="0" width="9.8" height="18.8" fill="#0c9cf0"/><rect x="0" y="0" width="19.2" height="18.8" fill="none" stroke="#c8a0d0" stroke-width="0.6"/><path d="M9.4 3 L9.4 15" stroke="#1a9ad0" stroke-width="1"/><path d="M9 5 L4.5 5 M6 3.3 L4 5 L6 6.7" fill="none" stroke="#1a9ad0" stroke-width="1.1"/><path d="M10 13.5 L15 13.5 M13 11.8 L15.2 13.5 L13 15.2" fill="none" stroke="#58d02a" stroke-width="1.2"/></svg>
<svg style="position:absolute;left:9px;top:357.7px;overflow:visible" width="18" height="21" viewBox="0 0 18 21"><rect x="0.5" y="1" width="6.5" height="3.5" fill="#9a9a9a"/><rect x="0.5" y="5.5" width="6.5" height="3.5" fill="#9a9a9a"/><rect x="0.5" y="10" width="6.5" height="3.5" fill="#9a9a9a"/><rect x="0.5" y="15.5" width="6.5" height="3.5" fill="#9a9a9a"/><rect x="1.3" y="1.8" width="5" height="1" fill="#c0c0c0"/><circle cx="13.5" cy="7" r="3" fill="none" stroke="#777" stroke-width="0.9"/><path d="M9 12 L11.5 9.3 M13.5 1.5 L13.5 4" stroke="#777" stroke-width="0.9"/></svg>
<svg style="position:absolute;left:8px;top:384px;overflow:visible" width="20" height="19.5" viewBox="0 0 20 19.5"><path d="M0.3 0.3 L8 7 L4.6 7.3 L6.6 11 L5 11.7 L3 8.1 L0.3 10.5 Z" fill="#1890ee"/><rect x="4.8" y="12.3" width="14.8" height="6.6" rx="1" fill="#f4f4f4" stroke="#e0c8a8" stroke-width="1"/><line x1="6.8" y1="15.6" x2="17.6" y2="15.6" stroke="#8aa8c8" stroke-width="1.2"/></svg>
<div style="position:absolute;left:5.5px;top:415.4px;width:23.7px;height:24px;background:linear-gradient(#c8c8c8,#d6d6d6);border:1px solid #a8a8a8;border-radius:2.5px;box-sizing:border-box"></div>
<svg style="position:absolute;left:10.1px;top:420.3px;overflow:visible" width="15.3" height="15.3" viewBox="0 0 15.3 15.3"><path d="M1 3 Q1.5 0.3 4 0.3 Q6.5 0.3 6.8 3 L6.8 5 L8.5 5 L8.5 3 Q8.8 0.3 11.3 0.3 Q13.8 0.3 14.3 3 L15 10 Q15 15 11 15 Q8 15 7.6 11 Q7.2 15 4.3 15 Q0.3 15 0.3 10 Z" fill="#163c8a"/><circle cx="3.8" cy="10.6" r="2.6" fill="#8ae4fc"/><circle cx="11.5" cy="10.6" r="2.6" fill="#8ae4fc"/><circle cx="7.65" cy="7" r="1" fill="#8ae4fc"/></svg>
<svg style="position:absolute;left:8.6px;top:443.9px;overflow:visible" width="19.5" height="20" viewBox="0 0 19.5 20"><path d="M1 16.3 L18.8 18.2 L18.6 19.8 L1 18.6 Z" fill="#6e3432"/><path d="M2.8 6 Q3.2 13.5 9.5 15.8 L19.2 17.6 Q15.5 14 12.5 9.5 Q9.5 5.2 2.8 6 Z" fill="#22a83a"/><path d="M5.5 8 Q11.5 9.5 14 15.2 Q8 13.5 5.5 8 Z" fill="#7ed456"/><path d="M4 11 Q6 14.5 9 15" fill="none" stroke="#f4f4f4" stroke-width="0.8"/><ellipse cx="6.2" cy="4.3" rx="4" ry="3.6" fill="#f29a1c"/><path d="M3 2 Q6 -0.2 9.6 2.6" fill="none" stroke="#e07010" stroke-width="0.8"/><path d="M0 3.2 L2.8 2.6 L2.6 4.6 Z" fill="#2a3c9a"/><circle cx="4.6" cy="3.4" r="0.6" fill="#111"/></svg>
</div></body></html>
